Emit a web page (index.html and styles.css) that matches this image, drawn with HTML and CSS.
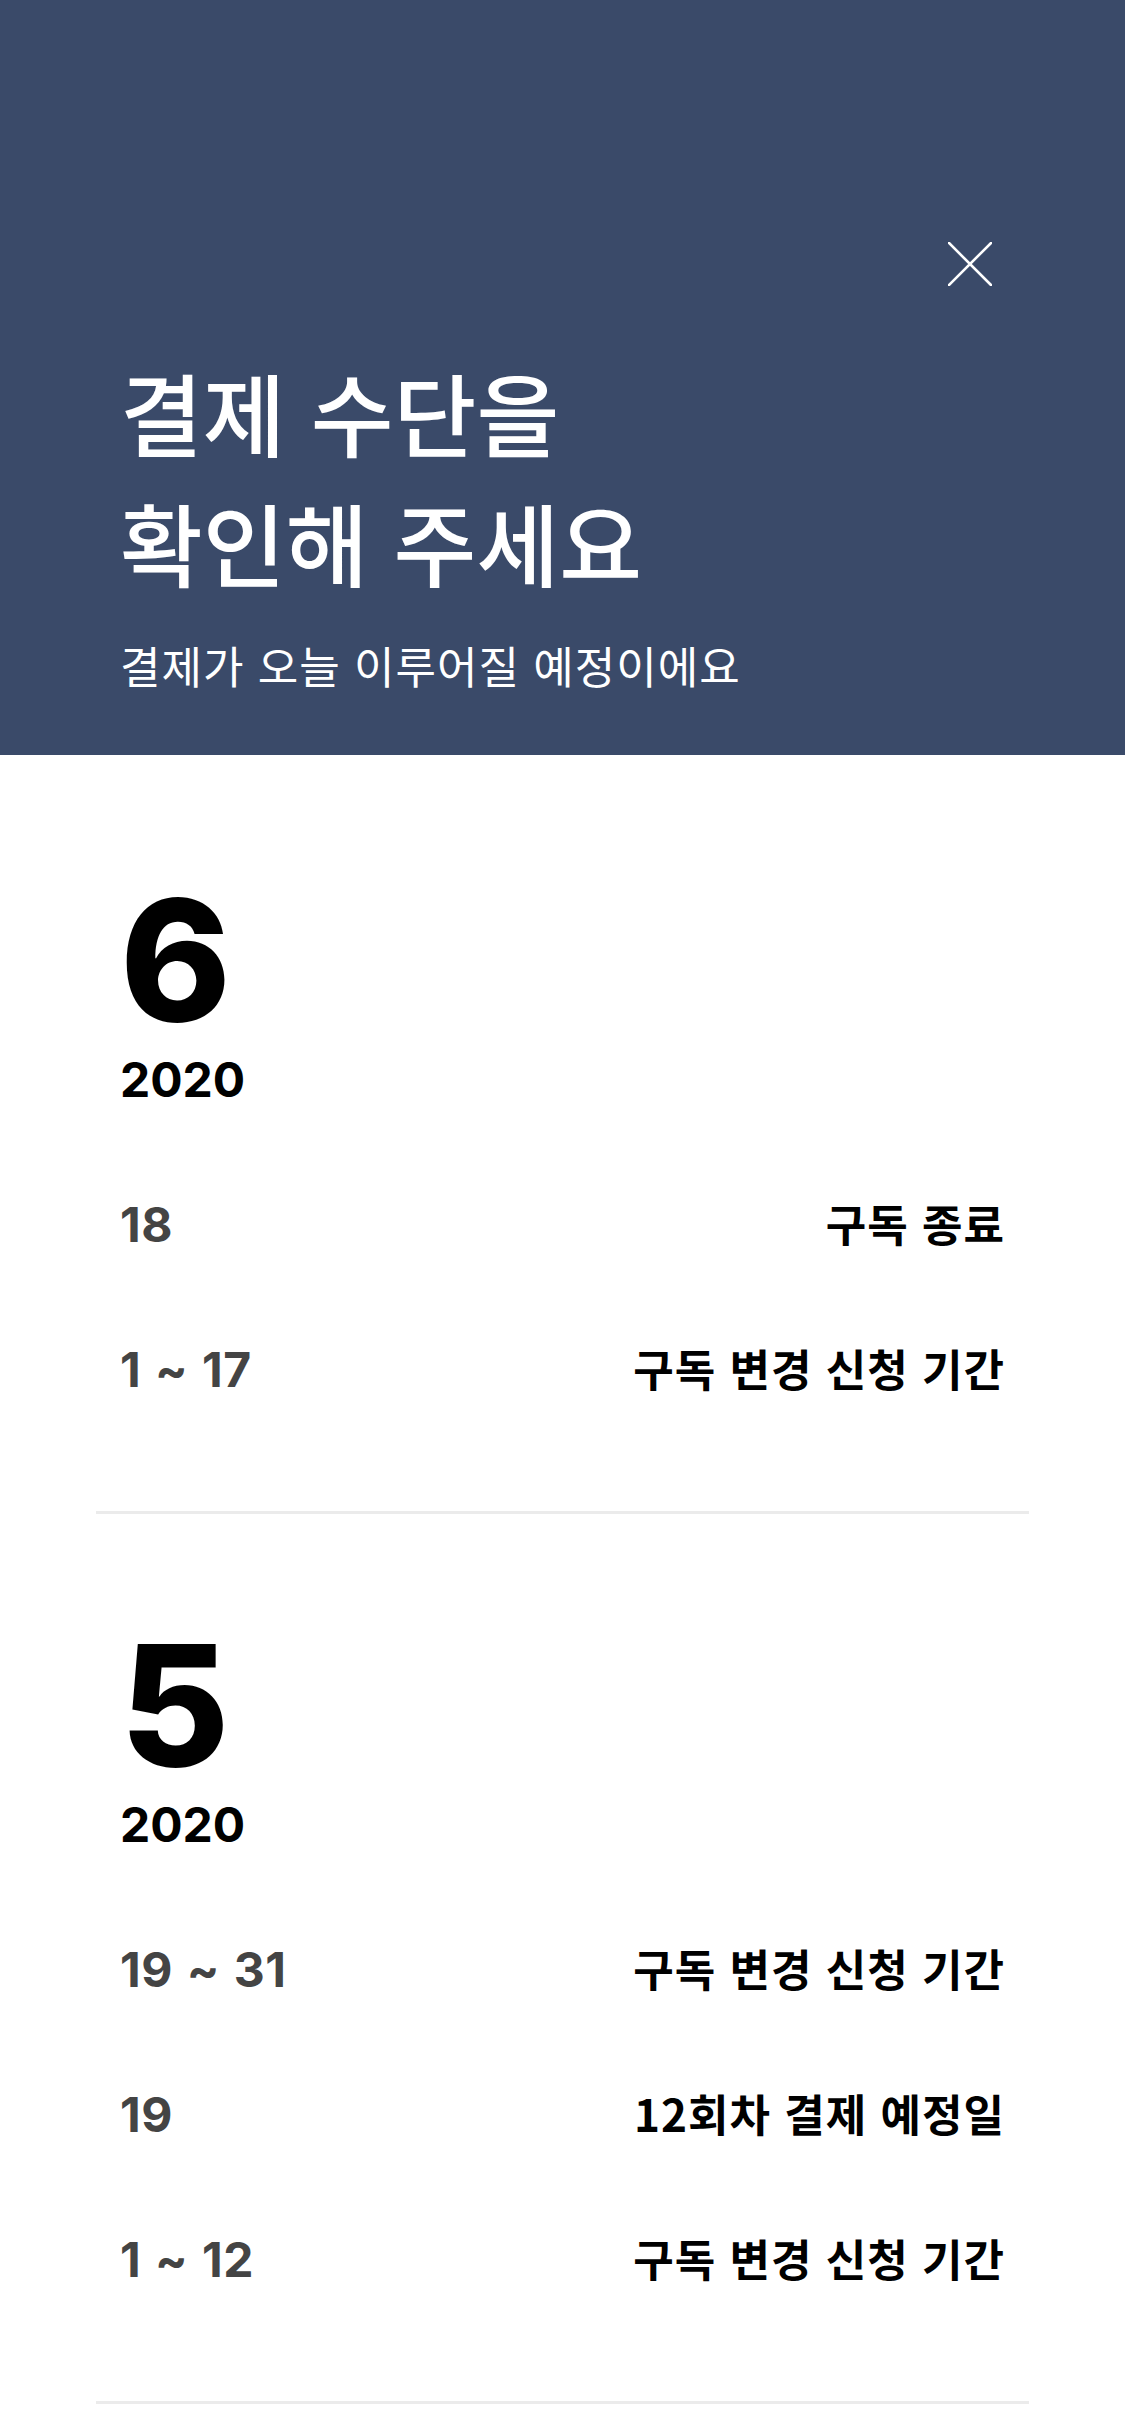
FILE: index.html
```html
<!DOCTYPE html>
<html lang="ko">
<head>
<meta charset="utf-8">
<title>결제 수단을 확인해 주세요</title>
<link rel="stylesheet" href="styles.css">
</head>
<body>
<header class="hero">
  <div class="hero-top">
    <button class="close" aria-label="닫기">
      <svg width="44" height="44" viewBox="0 0 44 44"><path d="M1 1 L43 43 M43 1 L1 43" stroke="#fff" stroke-width="2.6" fill="none" stroke-linecap="square"/></svg>
    </button>
  </div>
  <h1 class="title">결제 수단을<br>확인해 주세요</h1>
  <p class="subtitle">결제가 오늘 이루어질 예정이에요</p>
</header>
<main class="list">
  <section class="month">
    <div class="month-num">6</div>
    <div class="month-year">2020</div>
    <div class="rows">
      <div class="row"><span class="day">18</span><span class="label">구독 종료</span></div>
      <div class="row"><span class="day">1 ~ 17</span><span class="label">구독 변경 신청 기간</span></div>
    </div>
  </section>
  <section class="month">
    <div class="month-num">5</div>
    <div class="month-year">2020</div>
    <div class="rows">
      <div class="row"><span class="day">19 ~ 31</span><span class="label">구독 변경 신청 기간</span></div>
      <div class="row"><span class="day">19</span><span class="label">12회차 결제 예정일</span></div>
      <div class="row"><span class="day">1 ~ 12</span><span class="label">구독 변경 신청 기간</span></div>
    </div>
  </section>
</main>
</body>
</html>
```
FILE: styles.css
```css
* { box-sizing: border-box; }
html, body { margin: 0; padding: 0; background: #fff; }
body {
  width: 1125px;
  min-height: 2436px;
  font-family: "Noto Sans CJK KR", "Noto Sans", sans-serif;
}
.hero {
  background: #3a4a69;
  height: 755px;
  padding: 242px 0 0 120px;
  color: #fff;
}
.hero-top {
  display: flex;
  justify-content: flex-end;
  padding-right: 133px;
  height: 44px;
}
.close {
  width: 44px;
  height: 44px;
  padding: 0;
  margin: 0;
  border: 0;
  background: none;
  display: block;
}
.close svg { display: block; }
.title {
  margin: 60px 0 0 0;
  font-size: 90px;
  line-height: 130px;
  font-weight: 500;
  letter-spacing: 0;
}
.subtitle {
  margin: 29px 0 0 0;
  font-size: 44px;
  line-height: 60px;
  font-weight: 400;
  letter-spacing: 1px;
}
.list { padding-top: 14px; }
.month {
  margin: 0 96px;
  padding: 107px 24px 70px 24px;
  border-bottom: 3px solid #ebebeb;
}
.month-num {
  font-family: Inter, "Liberation Sans", sans-serif;
  font-size: 168px;
  line-height: 168px;
  font-weight: 800;
  color: #000;
  letter-spacing: -2px;
}
.month-year {
  margin-top: 7px;
  font-family: Inter, "Liberation Sans", sans-serif;
  font-size: 48px;
  line-height: 58px;
  font-weight: 700;
  color: #000;
}
.rows { margin-top: 42px; }
.row {
  display: flex;
  justify-content: space-between;
  align-items: baseline;
  height: 145px;
  line-height: 145px;
}
.day {
  font-family: Inter, "Liberation Sans", sans-serif;
  font-size: 48px;
  font-weight: 700;
  color: #444;
  letter-spacing: 0.5px;
  word-spacing: 2px;
}
.label {
  font-size: 44px;
  font-weight: 700;
  color: #000;
  letter-spacing: 1px;
}
```
